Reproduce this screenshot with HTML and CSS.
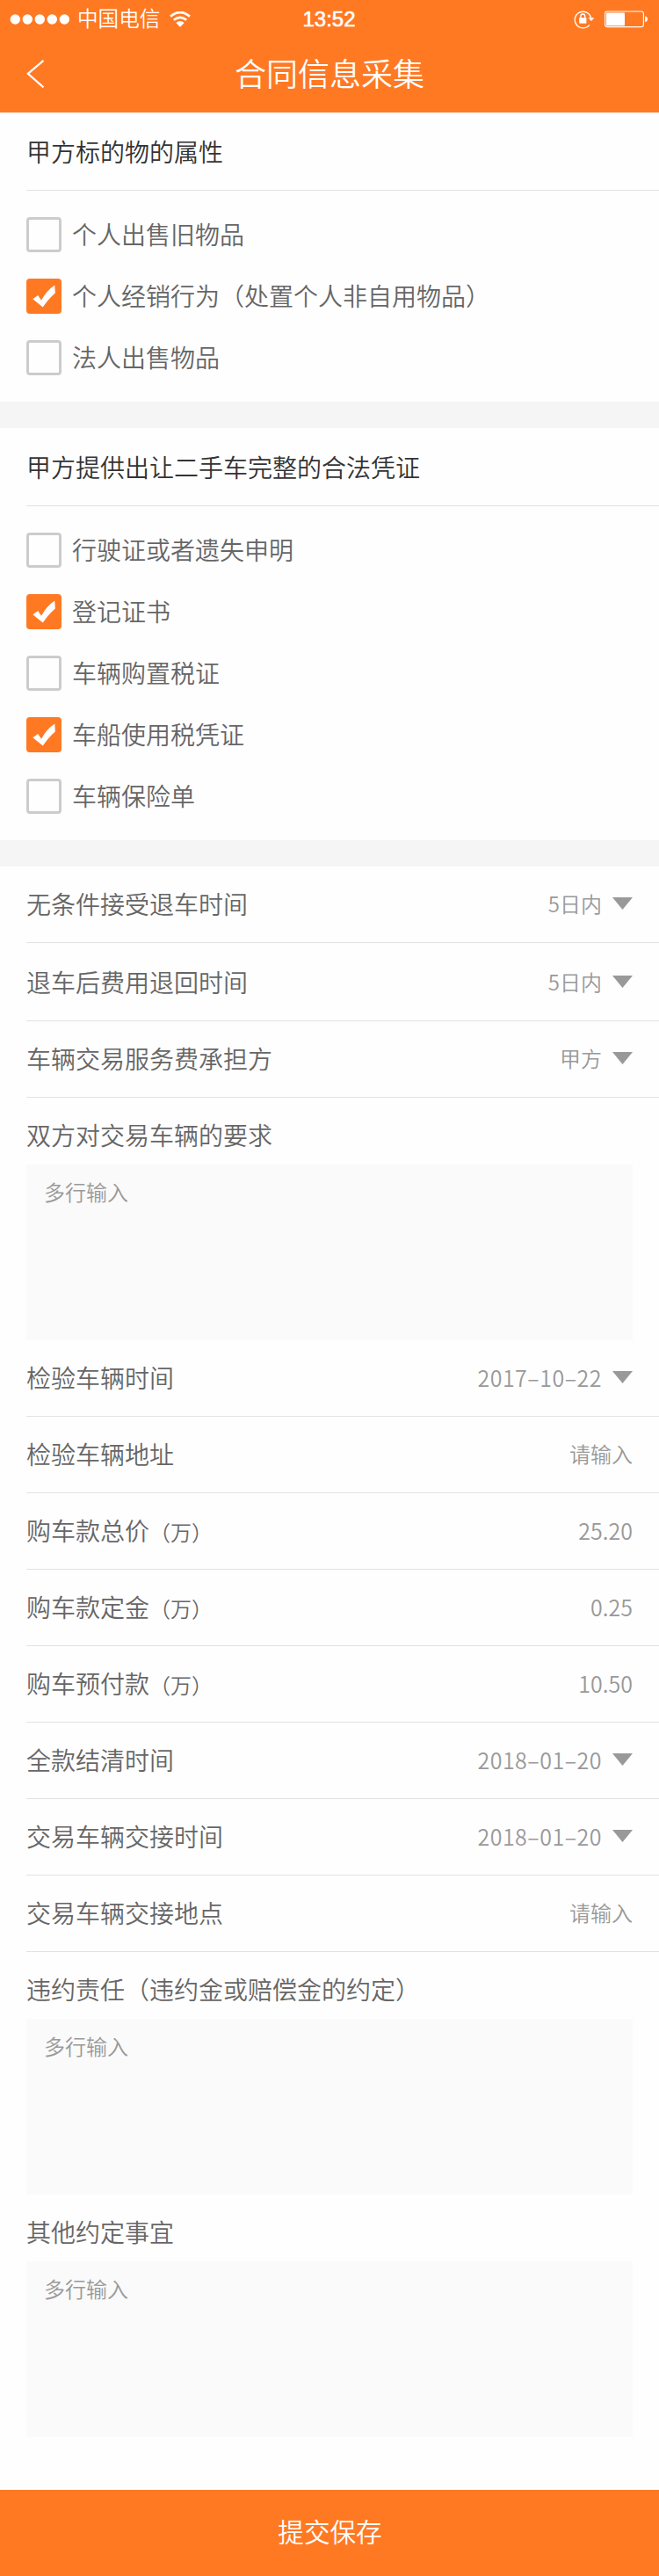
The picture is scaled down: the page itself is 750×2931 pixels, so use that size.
FILE: index.html
```html
<!DOCTYPE html>
<html lang="zh-CN">
<head>
<meta charset="utf-8">
<title>合同信息采集</title>
<link rel="stylesheet" href="styles.css">
</head>
<body>
<header class="header">
  <div class="status">
    <div class="status-left">
      <svg class="signal" width="68" height="12" viewBox="0 0 68 12" fill="#fff"><circle cx="6.3" cy="6" r="5.7"/><circle cx="20.3" cy="6" r="5.7"/><circle cx="34.3" cy="6" r="5.7"/><circle cx="48.3" cy="6" r="5.7"/><circle cx="62.3" cy="6" r="5.7"/></svg>
      <span class="carrier">中国电信</span>
      <svg class="wifi" width="24" height="18" viewBox="0 0 24 18"><path d="M1 5.6Q12-3.6 23 5.6M4.8 9.8Q12 4 19.2 9.8" fill="none" stroke="#fff" stroke-width="2.7"/><path d="M7.3 13Q12 9.2 16.7 13L12 17.7Z" fill="#fff"/></svg>
    </div>
    <span class="time">13:52</span>
    <div class="status-right">
      <svg width="24" height="22" viewBox="0 0 24 22"><path d="M17.8 17.4A9.3 9.3 0 1 1 19.6 9.5" fill="none" stroke="#fff" stroke-width="1.4"/><path d="M16.4 9.2h7L19.9 13z" fill="#fff"/><rect x="6.2" y="9.2" width="8.2" height="6.4" fill="#fff"/><path d="M7.9 9.5V7.4a2.4 2.4 0 0 1 4.8 0V9.5" fill="none" stroke="#fff" stroke-width="1.4"/></svg>
      <svg width="50" height="20" viewBox="0 0 50 20"><rect x=".6" y="1" width="43.8" height="17.6" rx="2.5" fill="none" stroke="#fff" stroke-width="1.1"/><rect x="2" y="2.4" width="21" height="14.8" rx="1" fill="#fff"/><path d="M46 6.5q3 .4 3 3.3t-3 3.3z" fill="#fff"/></svg>
    </div>
  </div>
  <div class="nav">
    <svg class="back" width="22" height="34" viewBox="0 0 22 34"><path d="M20.5 1.8L2.8 16.8L20.5 32.3" fill="none" stroke="#fff" stroke-width="2.2"/></svg>
    <h1 class="nav-title">合同信息采集</h1>
  </div>
</header>

<section class="group">
  <h2 class="group-title">甲方标的物的属性</h2>
  <div class="options">
    <div class="option"><i class="box"></i><span>个人出售旧物品</span></div>
    <div class="option"><svg class="check" viewBox="0 0 40 40"><path d="M7.3 23.2L13.2 19L17 24.8Q23 13.5 32.3 7.5L32.8 16.6Q25.5 22.8 18.8 32.6Z" fill="#fff"/></svg><span>个人经销行为（处置个人非自用物品）</span></div>
    <div class="option"><i class="box"></i><span>法人出售物品</span></div>
  </div>
</section>

<section class="group">
  <h2 class="group-title">甲方提供出让二手车完整的合法凭证</h2>
  <div class="options">
    <div class="option"><i class="box"></i><span>行驶证或者遗失申明</span></div>
    <div class="option"><svg class="check" viewBox="0 0 40 40"><path d="M7.3 23.2L13.2 19L17 24.8Q23 13.5 32.3 7.5L32.8 16.6Q25.5 22.8 18.8 32.6Z" fill="#fff"/></svg><span>登记证书</span></div>
    <div class="option"><i class="box"></i><span>车辆购置税证</span></div>
    <div class="option"><svg class="check" viewBox="0 0 40 40"><path d="M7.3 23.2L13.2 19L17 24.8Q23 13.5 32.3 7.5L32.8 16.6Q25.5 22.8 18.8 32.6Z" fill="#fff"/></svg><span>车船使用税凭证</span></div>
    <div class="option"><i class="box"></i><span>车辆保险单</span></div>
  </div>
</section>

<section class="form">
  <div class="row"><span>无条件接受退车时间</span><span class="value select">5日内</span></div>
  <div class="row row-tall"><span>退车后费用退回时间</span><span class="value select">5日内</span></div>
  <div class="row"><span>车辆交易服务费承担方</span><span class="value select">甲方</span></div>
  <div class="label">双方对交易车辆的要求</div>
  <div class="area">多行输入</div>
  <div class="row"><span>检验车辆时间</span><span class="value num date select">2017–10–22</span></div>
  <div class="row"><span>检验车辆地址</span><span class="value">请输入</span></div>
  <div class="row"><span>购车款总价<small class="unit">（万）</small></span><span class="value num">25.20</span></div>
  <div class="row"><span>购车款定金<small class="unit">（万）</small></span><span class="value num">0.25</span></div>
  <div class="row"><span>购车预付款<small class="unit">（万）</small></span><span class="value num">10.50</span></div>
  <div class="row"><span>全款结清时间</span><span class="value num date select">2018–01–20</span></div>
  <div class="row"><span>交易车辆交接时间</span><span class="value num date select">2018–01–20</span></div>
  <div class="row"><span>交易车辆交接地点</span><span class="value">请输入</span></div>
  <div class="label">违约责任（违约金或赔偿金的约定）</div>
  <div class="area">多行输入</div>
  <div class="label">其他约定事宜</div>
  <div class="area">多行输入</div>
</section>

<footer class="submit">提交保存</footer>
</body>
</html>
```
FILE: styles.css
```css
* { box-sizing: border-box; }

body {
  margin: 0;
  width: 750px;
  background: #fefefe;
  color: #666;
  font-family: "Noto Sans CJK SC", sans-serif;
  font-size: 28px;
  font-weight: 350;
}

.header { height: 128px; background: #ff7923; color: #fff; }

.status {
  display: grid;
  grid-template-columns: 1fr auto 1fr;
  align-items: center;
  height: 43px;
  padding: 0 12px 0 11px;
}
.status-left { display: flex; align-items: center; }
.carrier { height: 43px; margin: 0 11px 0 9px; font-size: 23.6px; line-height: 41px; }
.time {
  font-family: "Liberation Sans", sans-serif;
  font-size: 24px;
  font-weight: 400;
  -webkit-text-stroke: 0.6px #fff;
}
.status-right { display: flex; align-items: center; justify-content: flex-end; gap: 11px; }

.nav {
  display: grid;
  grid-template-columns: 1fr auto 1fr;
  align-items: center;
  height: 82px;
  padding: 0 29px;
}
.nav-title { height: 82px; margin: 0; font-size: 36px; font-weight: 350; line-height: 79px; }

.group { border-bottom: 30px solid #f5f5f5; }
.group-title {
  height: 89px;
  margin: 0 0 0 30px;
  border-bottom: 1px solid #e2e2e2;
  color: #333;
  font-size: 28px;
  font-weight: 350;
  line-height: 88px;
}
.options { display: flex; flex-direction: column; gap: 30px; padding: 30px; }
.option { display: flex; gap: 12px; height: 40px; line-height: 38px; }
.box, .check { flex: none; width: 40px; height: 40px; border-radius: 4px; }
.box { border: 3px solid #ccc; }
.check { background: #ff7923; }

.row {
  display: flex;
  justify-content: space-between;
  height: 87px;
  margin-left: 30px;
  padding-right: 30px;
  border-bottom: 1px solid #e2e2e2;
  line-height: 84px;
}
.row-tall { height: 89px; padding-top: 2px; }
.value {
  display: flex;
  height: 84px;
  align-items: center;
  color: #999;
  font-size: 24px;
}
.num { font-size: 25px; }
.date { letter-spacing: 0.5px; }
.select { gap: 12px; }
.select::after {
  content: "";
  width: 23px;
  height: 14px;
  background: #999;
  clip-path: polygon(0 0, 100% 0, 50% 100%);
}
.unit { font-size: 24px; }
.label { height: 76px; padding-left: 30px; line-height: 84px; }
.area {
  height: 200px;
  margin: 0 30px;
  padding: 0 20px;
  background: #fafafa;
  color: #999;
  font-size: 24px;
  line-height: 61px;
}

.submit {
  height: 98px;
  margin-top: 60px;
  padding-left: 1px;
  background: #ff7923;
  color: #fff;
  font-size: 29.6px;
  line-height: 94px;
  text-align: center;
}
```
